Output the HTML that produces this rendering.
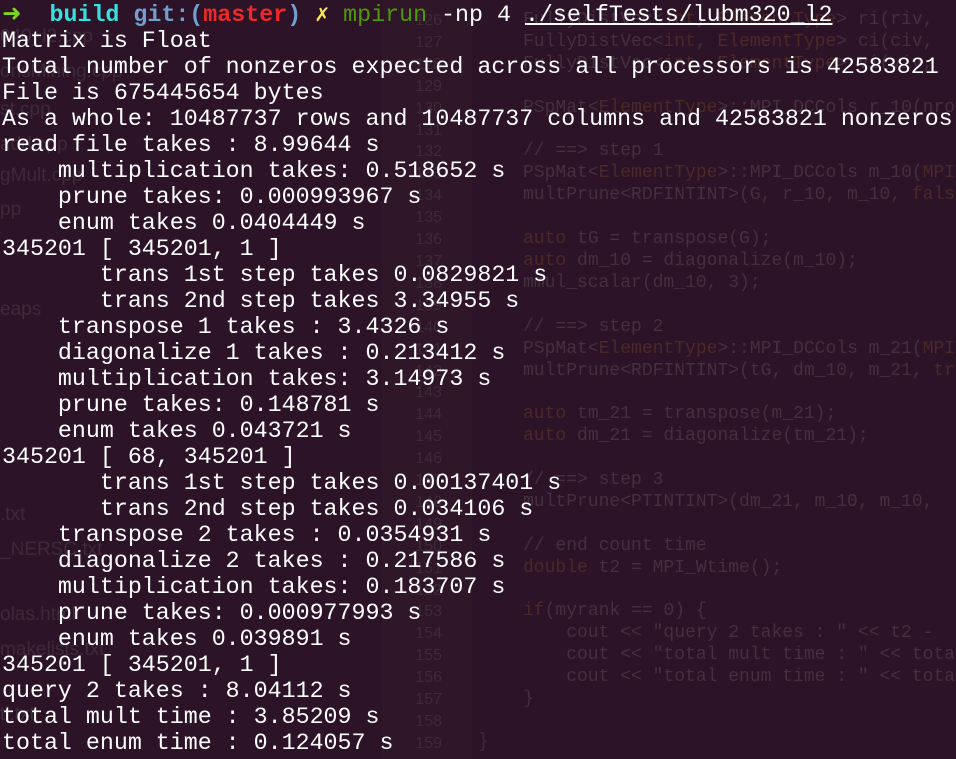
<!DOCTYPE html>
<html><head><meta charset="utf-8"><style>
html,body{margin:0;padding:0;width:956px;height:759px;overflow:hidden;background:#2c1327;}
.bg{position:absolute;left:0;top:0;width:956px;height:759px;font-family:"Liberation Sans",sans-serif;}
.gut{position:absolute;left:382px;top:0;width:90px;height:759px;background:#2f1629;}
.ln{position:absolute;left:396px;top:10px;font:16px/21.9px "Liberation Sans",sans-serif;color:#3e2a3a;text-align:right;width:46px;}
.code{position:absolute;left:523px;top:10px;font:18px/21.9px "Liberation Mono",monospace;color:#44303f;white-space:pre;}
.k{color:#4a2a26;}
.files{position:absolute;left:0;top:0;font:19px/1 "Liberation Sans",sans-serif;color:#3e2a3a;}
.files div{position:absolute;white-space:nowrap;}
.term{position:absolute;left:2px;top:2px;font:23.3px/26px "Liberation Mono","DejaVu Sans Mono",monospace;color:#ffffff;white-space:pre;}
.g{color:#7ed321;font-weight:bold;font-family:"DejaVu Sans",sans-serif;line-height:10px}.c{color:#34e2e2;font-weight:bold}.b{color:#729fcf;font-weight:bold}.r{color:#ef2929;font-weight:bold}.y{color:#fce94f;font-weight:bold}.gr{color:#4e9a06}
u{text-decoration:underline;}
</style></head><body>
<div class="bg">
<div class="gut"></div>
<div class="files">
<div style="left:0;top:27px">040_l2.cpp</div>
<div style="left:0;top:62px">onsMining.cpp</div>
<div style="left:0;top:100px">st.cpp</div>
<div style="left:0;top:135px">add.cpp</div>
<div style="left:0;top:166px">gMult.cpp</div>
<div style="left:0;top:200px">pp</div>
<div style="left:0;top:300px">eaps</div>
<div style="left:0;top:505px">.txt</div>
<div style="left:0;top:540px">_NERSC.txt</div>
<div style="left:0;top:605px">olas.html</div>
<div style="left:0;top:640px">makelists.txt</div>
<div style="left:0;top:705px">tl.txt</div>
</div>
<div class="ln">126<br>127<br>128<br>129<br>130<br>131<br>132<br>133<br>134<br>135<br>136<br>137<br>138<br>139<br>140<br>141<br>142<br>143<br>144<br>145<br>146<br>147<br>148<br>149<br>150<br>151<br>152<br>153<br>154<br>155<br>156<br>157<br>158<br>159</div>
<div class="code">FullyDistVec&lt;<span class="k">int</span>, <span class="k">ElementType</span>&gt; ri(riv, 
FullyDistVec&lt;<span class="k">int</span>, <span class="k">ElementType</span>&gt; ci(civ, 
FullyDistVec&lt;<span class="k">int</span>, <span class="k">ElementType</span>&gt; vi(viv, 

PSpMat&lt;<span class="k">ElementType</span>&gt;::MPI_DCCols r_10(nrow

// ==&gt; step 1
PSpMat&lt;<span class="k">ElementType</span>&gt;::MPI_DCCols m_10(<span class="k">MPI</span>
multPrune&lt;RDFINTINT&gt;(G, r_10, m_10, <span class="k">fals</span>

<span class="k">auto</span> tG = transpose(G);
<span class="k">auto</span> dm_10 = diagonalize(m_10);
mmul_scalar(dm_10, 3);

// ==&gt; step 2
PSpMat&lt;<span class="k">ElementType</span>&gt;::MPI_DCCols m_21(<span class="k">MPI</span>
multPrune&lt;RDFINTINT&gt;(tG, dm_10, m_21, <span class="k">tr</span>

<span class="k">auto</span> tm_21 = transpose(m_21);
<span class="k">auto</span> dm_21 = diagonalize(tm_21);

// ==&gt; step 3
multPrune&lt;PTINTINT&gt;(dm_21, m_10, m_10, 

// end count time
<span class="k">double</span> t2 = MPI_Wtime();

<span class="k">if</span>(myrank == 0) {
    cout &lt;&lt; "query 2 takes : " &lt;&lt; t2 - 
    cout &lt;&lt; "total mult time : " &lt;&lt; tota
    cout &lt;&lt; "total enum time : " &lt;&lt; tota
}

</div>
<div style="position:absolute;left:480px;top:730px;font:20px 'Liberation Sans';color:#3e2a3a">}</div>
</div>
<div class="term"><span class="g">➜</span>  <span class="c">build</span> <span class="b">git:(</span><span class="r">master</span><span class="b">)</span> <span class="y">✗</span> <span class="gr">mpirun</span> -np 4 <u>./selfTests/lubm320_l2</u>
Matrix is Float
Total number of nonzeros expected across all processors is 42583821
File is 675445654 bytes
As a whole: 10487737 rows and 10487737 columns and 42583821 nonzeros
read file takes : 8.99644 s
    multiplication takes: 0.518652 s
    prune takes: 0.000993967 s
    enum takes 0.0404449 s
345201 [ 345201, 1 ]
       trans 1st step takes 0.0829821 s
       trans 2nd step takes 3.34955 s
    transpose 1 takes : 3.4326 s
    diagonalize 1 takes : 0.213412 s
    multiplication takes: 3.14973 s
    prune takes: 0.148781 s
    enum takes 0.043721 s
345201 [ 68, 345201 ]
       trans 1st step takes 0.00137401 s
       trans 2nd step takes 0.034106 s
    transpose 2 takes : 0.0354931 s
    diagonalize 2 takes : 0.217586 s
    multiplication takes: 0.183707 s
    prune takes: 0.000977993 s
    enum takes 0.039891 s
345201 [ 345201, 1 ]
query 2 takes : 8.04112 s
total mult time : 3.85209 s
total enum time : 0.124057 s</div>
</body></html>
